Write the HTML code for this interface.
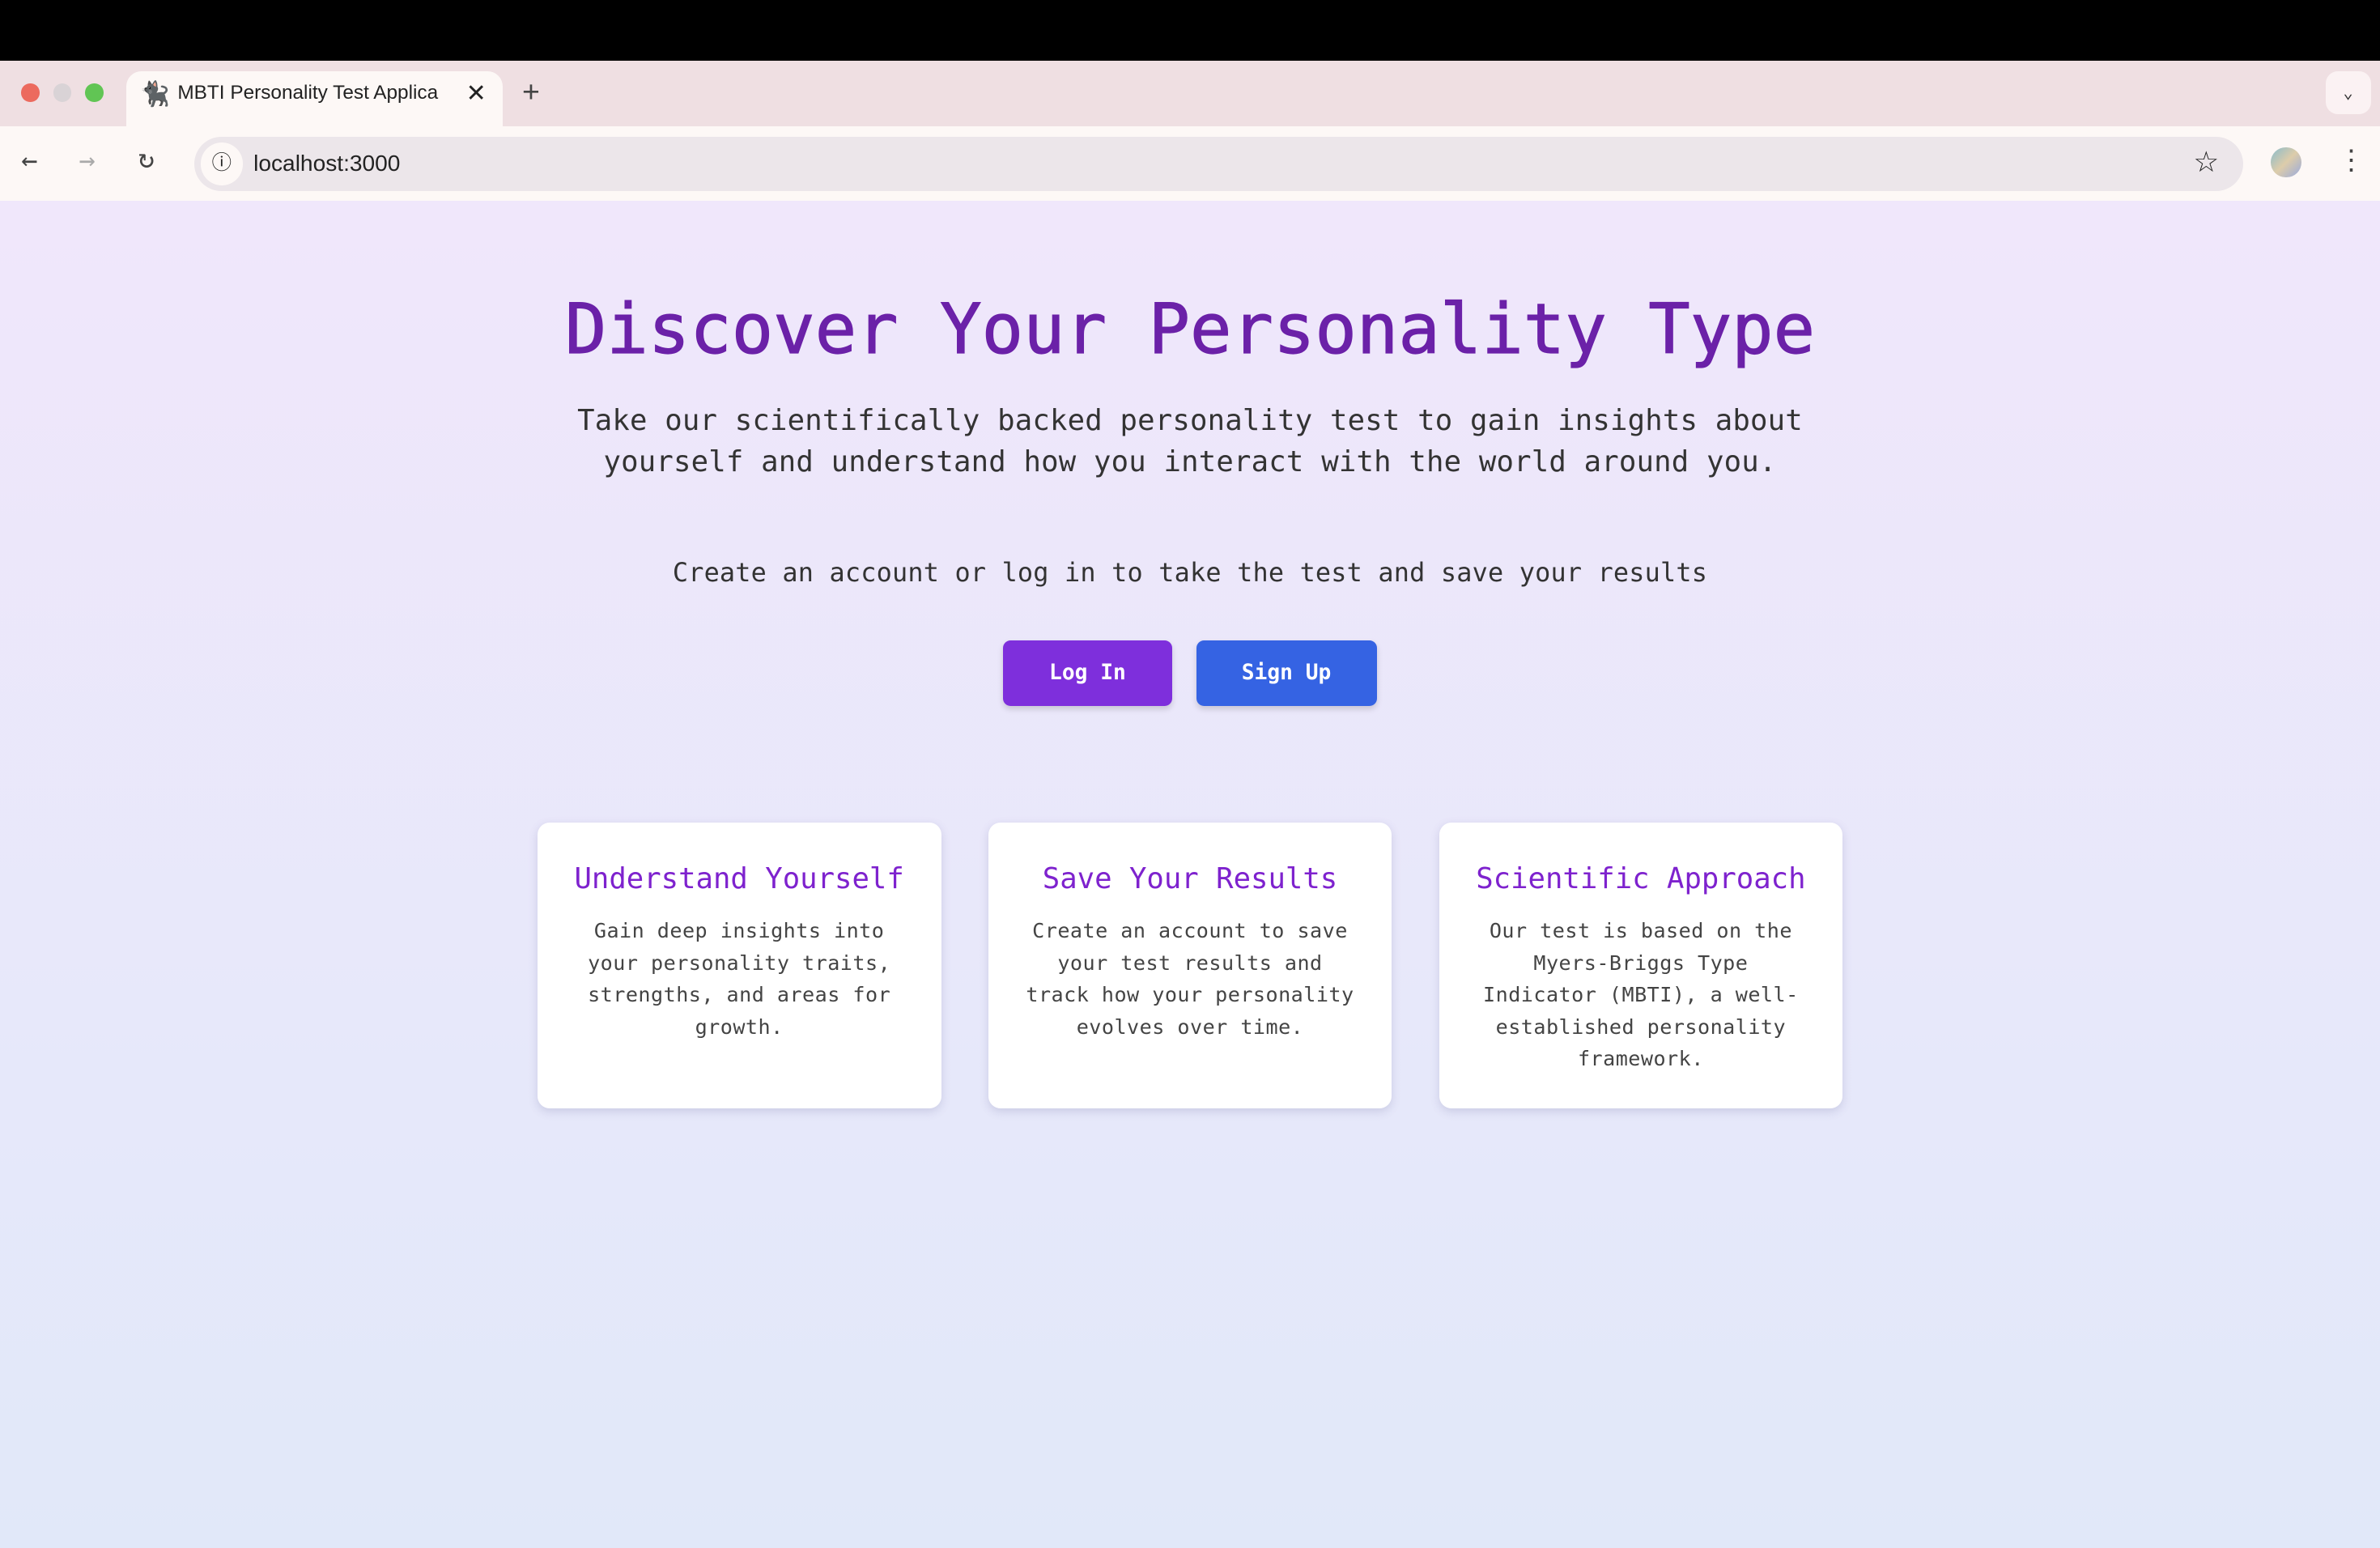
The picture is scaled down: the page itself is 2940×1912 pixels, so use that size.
<!DOCTYPE html>
<html><head><meta charset="utf-8"><style>
*{margin:0;padding:0;box-sizing:border-box}
html,body{width:2940px;height:1912px;overflow:hidden}
body{background:#000}
#w{zoom:1.875;width:1568px;height:1020px;position:relative;font-family:"DejaVu Sans Mono","Liberation Mono",monospace}
.tabs{position:absolute;top:40px;left:0;width:1568px;height:43px;background:#efdfe2}
.dot{position:absolute;top:55px;width:12px;height:12px;border-radius:50%}
.tab{position:absolute;left:83px;top:47px;width:248px;height:40px;background:#fdf8f6;border-radius:10px 10px 0 0;font-family:"Liberation Sans",sans-serif;font-size:13px;color:#222}
.tool{position:absolute;top:83px;left:0;width:1568px;height:50px;background:#fdf8f6;border-bottom:1px solid #ece4e6}
.addr{position:absolute;left:128px;top:7px;width:1350px;height:36px;border-radius:18px;background:#ece6ea;font-family:"Liberation Sans",sans-serif;font-size:15px;color:#222}
.page{position:absolute;top:132px;left:0;width:1568px;height:888px;background:linear-gradient(#f0e7fb,#e1e8f9);text-align:center}
h1{position:absolute;top:59px;width:100%;font-size:45.6px;font-weight:normal;color:#6b21a8;letter-spacing:0;-webkit-text-stroke:0.6px #6b21a8}
.sub{position:absolute;top:132px;width:100%;font-size:19px;line-height:27px;color:#333;letter-spacing:0.1px}
.cta{position:absolute;top:235px;width:100%;font-size:17px;color:#333;letter-spacing:0.1px}
.btn{position:absolute;top:290px;height:43px;border-radius:5px;color:#fff;font-size:14px;font-weight:bold;line-height:43px;box-shadow:0 2px 4px rgba(0,0,0,.15)}
.card{position:absolute;top:410px;width:266px;height:188px;background:#fff;border-radius:8px;box-shadow:0 2px 6px rgba(80,80,140,.18)}
.card h3{margin-top:26px;font-size:19px;font-weight:normal;color:#7e22ce}
.card p{margin:13px auto 0;width:222px;font-size:13.4px;line-height:21px;color:#444;letter-spacing:0.25px}
</style></head><body><div id="w">
<div class="tabs"></div>
<div class="dot" style="left:14px;background:#ec6a5e"></div>
<div class="dot" style="left:35px;background:#d9d3d6"></div>
<div class="dot" style="left:56px;background:#61c554"></div>
<div class="tab"><span style="position:absolute;left:9px;top:6px;font-size:16px">🐈‍⬛</span><span style="position:absolute;left:34px;top:7px">MBTI Personality Test Applica</span><span style="position:absolute;left:224px;top:5px;font-size:16px">✕</span></div>
<div style="position:absolute;left:344px;top:49px;font-size:20px;color:#444;font-family:'Liberation Sans'">+</div>
<div style="position:absolute;left:1532px;top:47px;width:30px;height:28px;border-radius:8px;background:#fbf2f3;text-align:center;line-height:28px;font-size:11px;color:#333">⌄</div>
<div class="tool">
<div style="position:absolute;left:14px;top:12px;font-size:18px;color:#444">←</div>
<div style="position:absolute;left:52px;top:12px;font-size:18px;color:#aaa">→</div>
<div style="position:absolute;left:91px;top:11px;font-size:18px;color:#444">↻</div>
<div class="addr"><div style="position:absolute;left:4px;top:4px;width:28px;height:28px;border-radius:50%;background:#fdf8f6;text-align:center;line-height:28px;font-size:13px">ⓘ</div><span style="position:absolute;left:39px;top:9px">localhost:3000</span><span style="position:absolute;right:16px;top:6px;font-size:19px">☆</span></div>
<div style="position:absolute;left:1496px;top:14px;width:20px;height:20px;border-radius:50%;background:linear-gradient(135deg,#8bc,#dca,#9ad)"></div>
<div style="position:absolute;left:1540px;top:12px;font-size:18px;color:#444">⋮</div>
</div>
<div class="page">
<h1>Discover Your Personality Type</h1>
<div class="sub">Take our scientifically backed personality test to gain insights about<br>yourself and understand how you interact with the world around you.</div>
<div class="cta">Create an account or log in to take the test and save your results</div>
<div class="btn" style="left:661px;width:111px;background:#7e2fdc">Log In</div>
<div class="btn" style="left:788px;width:119px;background:#3563e3">Sign Up</div>
<div class="card" style="left:354px"><h3>Understand Yourself</h3><p>Gain deep insights into your personality traits, strengths, and areas for growth.</p></div>
<div class="card" style="left:651px"><h3>Save Your Results</h3><p>Create an account to save your test results and track how your personality evolves over time.</p></div>
<div class="card" style="left:948px"><h3>Scientific Approach</h3><p>Our test is based on the Myers-Briggs Type Indicator (MBTI), a well-established personality framework.</p></div>
</div>
</div></body></html>
